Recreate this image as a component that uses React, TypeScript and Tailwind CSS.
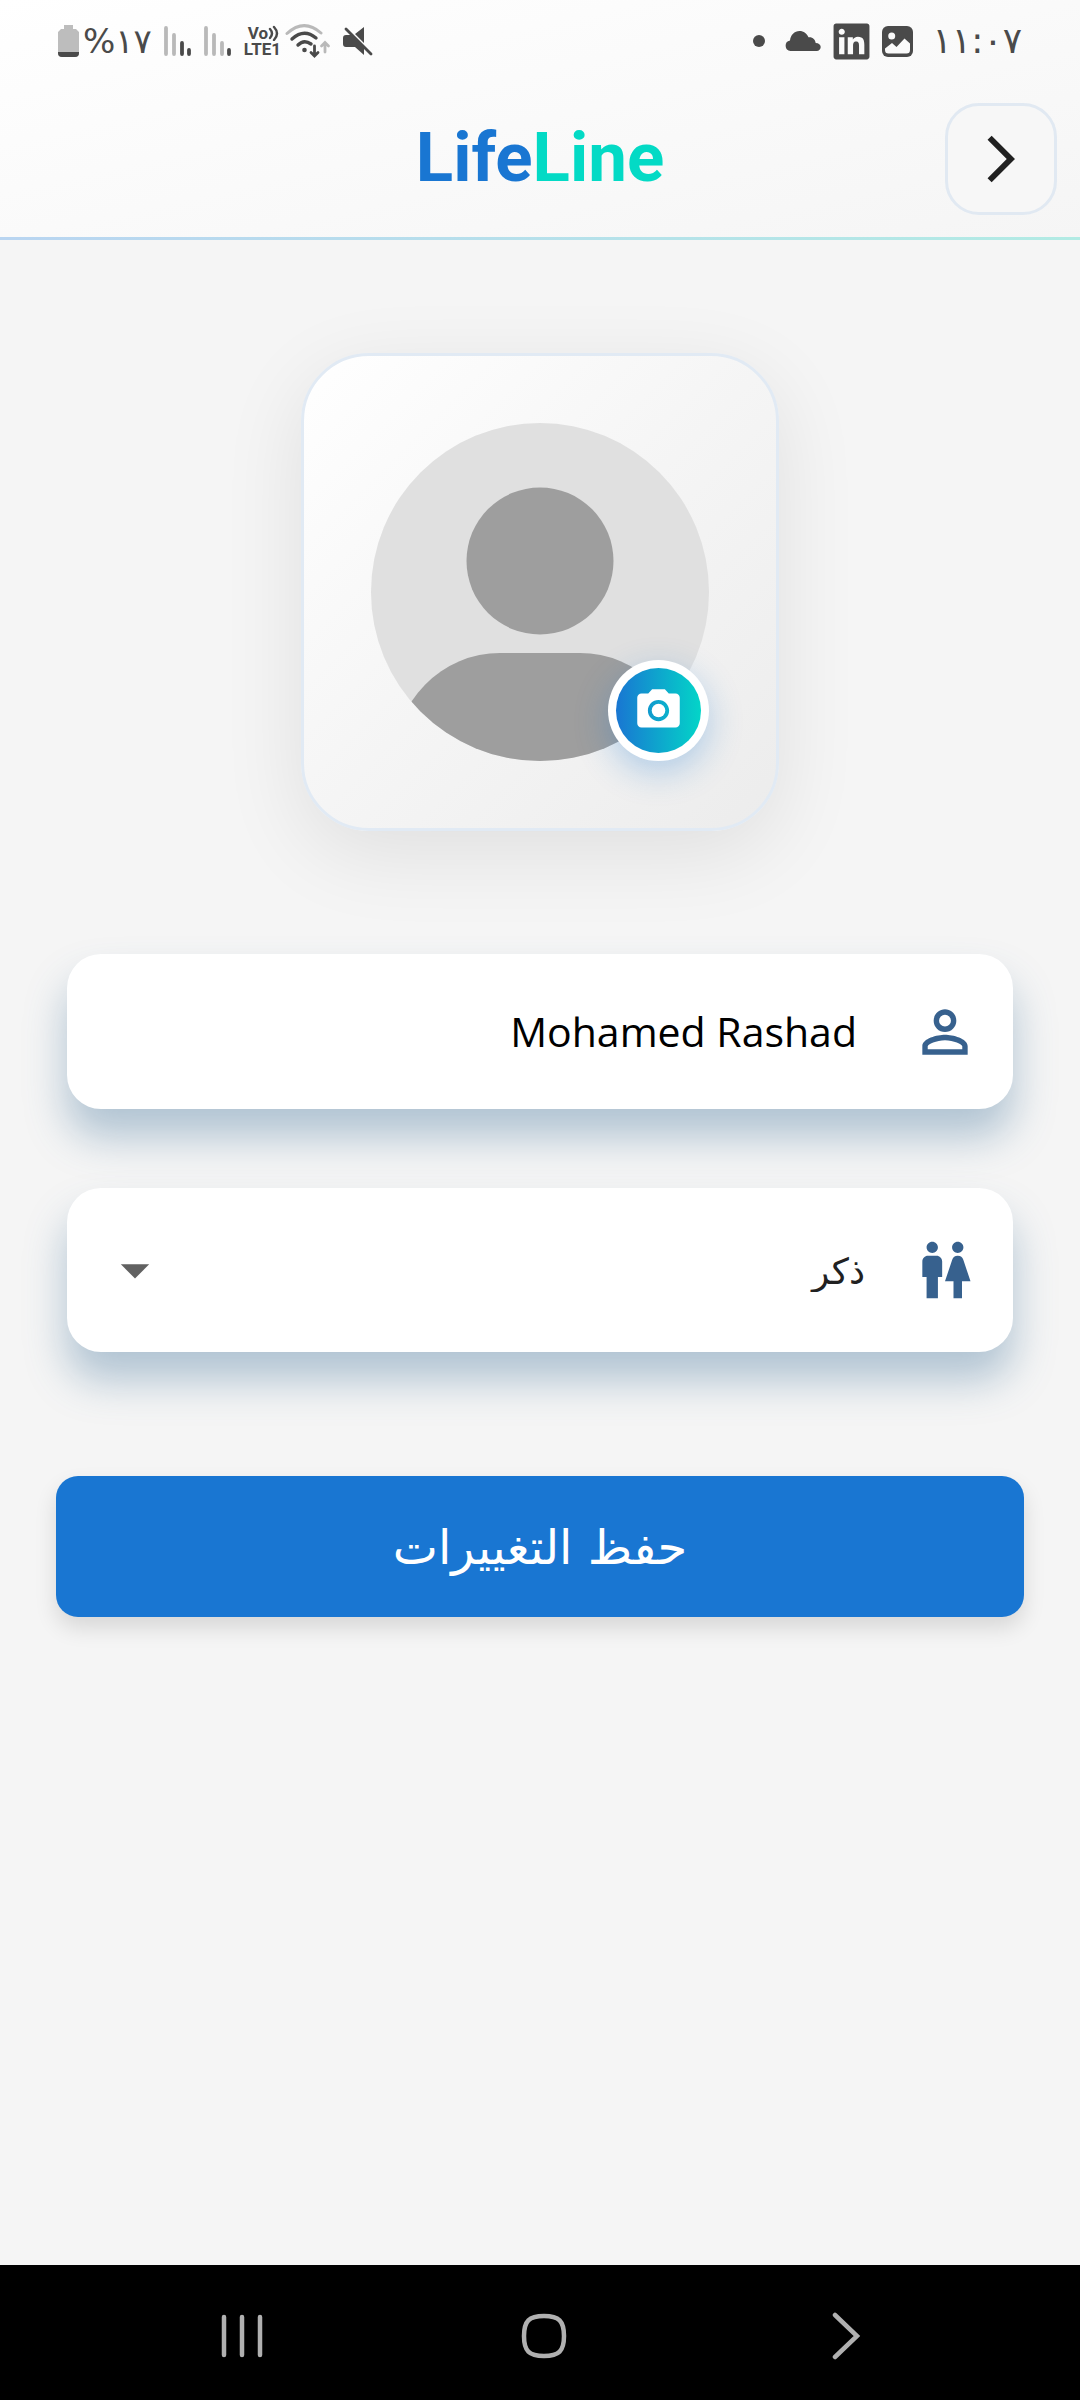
import { useState } from "react"
import { FaLinkedin } from "react-icons/fa"
import {
  MdArrowDropDown,
  MdArrowForwardIos,
  MdPersonOutline,
  MdPhotoCamera,
  MdWc,
} from "react-icons/md"

interface SignalProps {
  activeBars: number
}

// Mobile signal, the weakest bars on the right
const Signal = ({ activeBars }: SignalProps) => {
  const bars = [
    { x: 2, top: 2 },
    { x: 10, top: 9 },
    { x: 18, top: 17 },
    { x: 25, top: 24 },
  ]

  return (
    <svg viewBox="0 0 28 31" className="w-7 h-[31px]" aria-hidden="true">
      {bars.map((bar, i) => (
        <line
          key={bar.x}
          x1={bar.x}
          x2={bar.x}
          y1={bar.top}
          y2={28}
          strokeWidth="3.8"
          strokeLinecap="round"
          stroke={i >= bars.length - activeBars ? "#4a4a4a" : "#b9b9b9"}
        />
      ))}
    </svg>
  )
}

const Battery = () => (
  <svg viewBox="0 0 21 32" className="w-[21px] h-8" aria-hidden="true">
    <path d="M6 0h9v4h3l3 3v21q0 4-4 4H4q-4 0-4-4V7l3-3h3z" fill="#bdbdbd" />
    <path d="M0 27h21v1q0 4-4 4H4q-4 0-4-4z" fill="#4a4a4a" />
  </svg>
)

const VoLte = () => (
  <div dir="ltr" className="flex flex-col font-[Roboto,sans-serif] text-[17px] leading-4 font-bold">
    <span className="flex items-center pl-1">
      Vo
      <svg viewBox="0 0 11 16" className="w-[11px] h-4" fill="none" aria-hidden="true">
        <path
          d="M2 4q4 4.500 0 9M6 2q6 6.500 0 13"
          stroke="currentColor"
          strokeWidth="2.4"
          strokeLinecap="round"
        />
      </svg>
    </span>
    <span>LTE1</span>
  </div>
)

const Wifi = () => (
  <svg viewBox="0 0 46 34" className="w-[46px] h-[34px]" fill="none" strokeLinecap="round" aria-hidden="true">
    <path d="M2 9.500Q19-6 36 9" stroke="#b9b9b9" strokeWidth="3" />
    <path d="M7 15Q19 4 31 14M13 21Q19 15 26 20" stroke="#4a4a4a" strokeWidth="3.4" />
    <circle cx="19.500" cy="26" r="2.300" fill="#4a4a4a" />
    <path d="M29.500 22v10M26 28.500l3.500 3.500 3.500-3.500" stroke="#4a4a4a" strokeWidth="2.800" />
    <path d="M40 28V19M36.500 22l3.500-3.500 3.500 3.500" stroke="#b9b9b9" strokeWidth="2.800" />
  </svg>
)

const Muted = () => (
  <svg viewBox="0 0 30 30" className="w-[30px] h-[30px]" aria-hidden="true">
    <path d="M12 8L21 1v16zM3 9h6l12 12v8l-9-8H3q-3 0-3-3v-6q0-3 3-3z" fill="#4a4a4a" />
    <path d="M3 3l25 25" stroke="#4a4a4a" strokeWidth="2.800" strokeLinecap="round" />
  </svg>
)

const Cloud = () => (
  <svg viewBox="0 0 36 20" className="w-9 h-5" aria-hidden="true">
    <path
      d="M5.500 20A5.300 5.300 0 0 1 5 9.500C5.500 4 9.500 0 14.500 0c4.200 0 7.500 2.500 9 6.300 4-.6 6.800 2.400 7.200 5.700 3 0 5 1.700 5 4s-1.700 4-4 4z"
      fill="#4a4a4a"
    />
  </svg>
)

const Picture = () => (
  <svg viewBox="0 0 31 31" className="w-[31px] h-[31px]" aria-hidden="true">
    <rect width="31" height="31" rx="6" fill="#4a4a4a" />
    <circle cx="9.700" cy="10" r="3.500" fill="#fafafa" />
    <path d="M3 24v-1.500l7-5.500 4.500 4L22.500 12.500l5.500 5V24q0 3.500-3.500 3.500h-18Q3 27.500 3 24z" fill="#fafafa" />
  </svg>
)

const StatusBar = () => (
  <div className="flex items-center justify-between h-[82px] px-[58px] text-[#4a4a4a]">
    <div className="flex items-center gap-3">
      <time className="ml-2 font-['DejaVu_Sans',sans-serif] text-4xl leading-none">١١:٠٧</time>
      <Picture />
      <FaLinkedin className="-mx-0.5 w-[41px] h-[41px]" />
      <Cloud />
      <span className="w-3 h-3 mr-2 rounded-full bg-[#4a4a4a]" />
    </div>
    <div className="flex items-center gap-3">
      <Muted />
      <div className="flex items-center gap-1">
        <Wifi />
        <VoLte />
      </div>
      <Signal activeBars={1} />
      <Signal activeBars={2} />
      <div className="flex items-center gap-1">
        <span className="font-['DejaVu_Sans',sans-serif] text-[34px] leading-none">١٧%</span>
        <Battery />
      </div>
    </div>
  </div>
)

const Header = () => (
  <header className="bg-linear-to-br from-white to-[#f5f5f5]">
    <StatusBar />
    <div className="grid grid-cols-[1fr_auto_1fr] items-center px-[23px] pt-[21px] pb-[22px]">
      <button
        type="button"
        aria-label="رجوع"
        className="flex items-center justify-center w-28 h-28 rounded-[34px] border-3 border-[#e1e9f2] bg-[#f7f7f7]"
      >
        <MdArrowForwardIos className="w-14 h-14 text-[#212121]" />
      </button>
      <h1 dir="ltr" className="pb-1 font-[Roboto,sans-serif] text-[69px] leading-none font-bold text-[#1976d2]">
        Life<span className="text-[#03dac5]">Line</span>
      </h1>
    </div>
    <div className="h-[3px] bg-linear-to-r from-[#b9d5f1] to-[#b2ebe4]" />
  </header>
)

const Avatar = () => (
  <div className="p-[67px] rounded-[68px] border-3 border-[#e1eaf4] bg-linear-to-br from-white via-[#f5f5f5] to-[#ececec] shadow-[0_22px_84px_rgba(0,0,0,0.09)]">
    <div className="relative">
      <svg viewBox="0 0 338 338" className="w-[338px] h-[338px]" role="img" aria-label="الصورة الشخصية">
        <clipPath id="avatar-circle">
          <circle cx="169" cy="169" r="169" />
        </clipPath>
        <g clipPath="url(#avatar-circle)">
          <rect width="338" height="338" fill="#e0e0e0" />
          <circle cx="169" cy="138" r="73.500" fill="#9e9e9e" />
          <path d="M23 338a106 108 0 0 1 106-108h80a106 108 0 0 1 106 108z" fill="#9e9e9e" />
        </g>
      </svg>
      <button
        type="button"
        aria-label="تغيير الصورة"
        className="absolute right-0 bottom-0 flex items-center justify-center w-[101px] h-[101px] rounded-full bg-white shadow-[0_11px_34px_rgba(25,118,210,0.3)]"
      >
        <span className="flex items-center justify-center w-[85px] h-[85px] rounded-full bg-linear-to-r/srgb from-[#1976d2] to-[#03d5c8]">
          <MdPhotoCamera className="w-[51px] h-[51px] text-white" />
        </span>
      </button>
    </div>
  </div>
)

const NavBar = () => (
  <nav className="grid grid-cols-[1fr_auto_1fr] items-center h-[135px] pt-[6px] pl-[218px] pr-[210px] bg-black text-[#b0b0b0]">
    <button type="button" aria-label="Back" className="justify-self-start">
      <svg viewBox="0 0 48 48" className="w-12 h-12" fill="none" stroke="currentColor" strokeWidth="4.500" strokeLinecap="round">
        <path d="M13 3l22 21-22 21" />
      </svg>
    </button>
    <button type="button" aria-label="Home">
      <svg viewBox="0 0 48 48" className="w-12 h-12" fill="none" stroke="currentColor" strokeWidth="4.500">
        <path d="M24 4C39 4 44 9 44 24S39 44 24 44 4 39 4 24 9 4 24 4z" />
      </svg>
    </button>
    <button type="button" aria-label="Recents" className="justify-self-end">
      <svg viewBox="0 0 48 48" className="w-12 h-12" stroke="currentColor" strokeWidth="4.500" strokeLinecap="round">
        <path d="M6 5v38M24 5v38M42 5v38" />
      </svg>
    </button>
  </nav>
)

export default function App() {
  const [name, setName] = useState("Mohamed Rashad")
  const [gender, setGender] = useState("male")

  return (
    <div dir="rtl" className="flex flex-col min-h-screen bg-[#f5f5f5]">
      <Header />

      <main className="flex-1 flex flex-col items-center pt-[113px] pb-12">
        <Avatar />

        <form className="w-full mt-[123px]" onSubmit={(e) => e.preventDefault()}>
          <div className="flex flex-col gap-[79px] px-[67px]">
            <label className="flex items-center gap-[54px] h-[155px] px-[34px] rounded-[34px] bg-white shadow-[0_28px_42px_rgba(55,108,150,0.36)]">
              <MdPersonOutline className="shrink-0 w-[68px] h-[68px] text-[#37618e]" />
              <input
                type="text"
                aria-label="الاسم"
                value={name}
                onChange={(e) => setName(e.target.value)}
                className="flex-1 min-w-0 text-right font-['Open_Sans',sans-serif] text-[41px] text-black outline-none"
              />
            </label>

            <label className="flex items-center h-[164px] px-[34px] rounded-[34px] bg-white shadow-[0_28px_42px_rgba(55,108,150,0.36)]">
              <MdWc className="shrink-0 w-[68px] h-[68px] text-[#37618e]" />
              <select
                aria-label="النوع"
                value={gender}
                onChange={(e) => setGender(e.target.value)}
                className="flex-1 min-w-0 pt-1 pr-[46px] appearance-none bg-transparent font-['DejaVu_Sans',sans-serif] text-4xl text-[#212121] outline-none"
              >
                <option value="male">ذكر</option>
                <option value="female">أنثى</option>
              </select>
              <MdArrowDropDown className="shrink-0 w-[68px] h-[68px] text-[#616161]" />
            </label>
          </div>

          <div className="px-14 mt-[124px]">
            <button
              type="submit"
              className="w-full h-[141px] rounded-[22px] bg-[#1976d2] font-['DejaVu_Sans',sans-serif] text-5xl text-white shadow-[0_11px_22px_rgba(0,0,0,0.12)]"
            >
              حفظ التغييرات
            </button>
          </div>
        </form>
      </main>

      <NavBar />
    </div>
  )
}
